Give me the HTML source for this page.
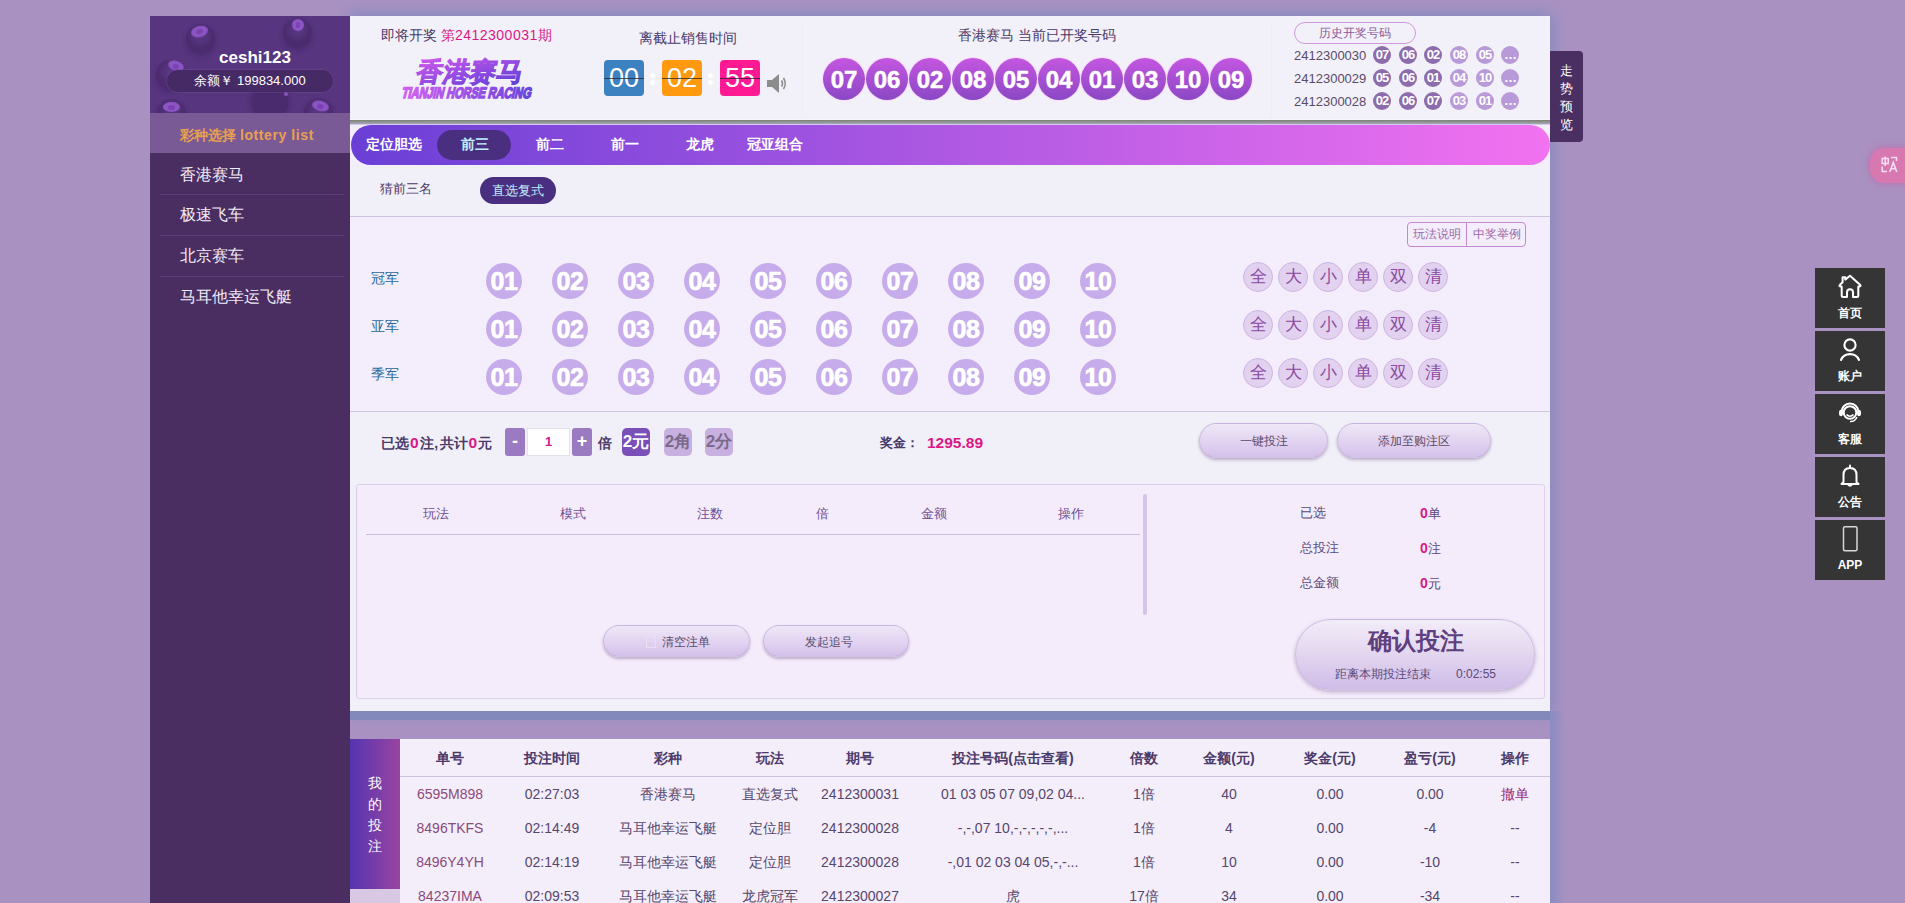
<!DOCTYPE html>
<html><head><meta charset="utf-8"><style>
*{margin:0;padding:0;box-sizing:border-box;}
html,body{width:1905px;height:903px;overflow:hidden;}
body{background:#a992c2;font-family:"Liberation Sans",sans-serif;position:relative;color:#4a3a6a;}
.a{position:absolute;}
.c{text-align:center;white-space:nowrap;}
#side{left:150px;top:16px;width:200px;height:887px;background:#4a2e62;z-index:5;}
#sidehead{left:0;top:0;width:200px;height:97px;background:#57357f;overflow:hidden;}
.bb{position:absolute;border-radius:50%;background:radial-gradient(circle at 50% 40%,#5a3a85 0%,#4c2c70 55%,#4a2a6c 75%,rgba(80,50,120,0) 100%);box-shadow:0 3px 5px rgba(50,25,80,.35);}
.bb i{position:absolute;border-radius:50%;background:#8c54c4;filter:blur(0.6px);}
.bb i:after{content:"";position:absolute;left:30%;top:25%;width:40%;height:50%;border-radius:50%;background:#7c42b2;}
#uname{left:5px;top:31px;width:200px;font-size:17px;font-weight:bold;color:#fff;line-height:22px;}
#bal{left:17px;top:54px;width:166px;height:22px;border-radius:11px;background:#452a66;box-shadow:0 0 0 1px rgba(110,70,150,.45);color:#fff;font-size:13px;line-height:22px;}
#lotbar{left:0;top:97px;width:200px;height:40px;background:#7a5a95;color:#e8a050;font-size:14px;font-weight:bold;line-height:44px;padding-left:30px;white-space:nowrap;}
.li{left:30px;width:170px;font-size:16px;color:#f2ecf8;line-height:20px;}
.sep{left:10px;width:184px;height:1px;background:#5c3f7a;}
#main{left:350px;top:16px;width:1200px;height:695px;background:#f3eefa;box-shadow:0 0 15px 2px #8088c0;}
#hdr{left:0;top:0;width:1200px;height:104px;background:#f2f0f8;}
.t13{font-size:14px;}
.pink{color:#da1888;}
.cd{width:40px;height:36px;border-radius:4px;color:#fff;font-size:27px;line-height:36px;text-align:center;overflow:hidden;}
.cd:after{content:"";position:absolute;left:0;top:18px;width:40px;height:1px;background:rgba(40,30,40,.75);}
.dot{width:5px;height:5px;border-radius:50%;background:#fff;}
.ball{width:42px;height:42px;border-radius:50%;background:linear-gradient(#c456e0,#8a48c4);color:#fff;font-weight:bold;font-size:24px;line-height:44px;-webkit-text-stroke:0.5px #fff;text-align:center;box-shadow:0 0 0 1px #f8d8ff;}
.hb{width:18px;height:18px;border-radius:50%;color:#fff;font-weight:bold;font-size:13px;line-height:18px;text-align:center;letter-spacing:-1px;}
.hb.d{background:#8c6cab;}
.hb.l{background:#b99ad8;}
.hnum{font-size:13px;color:#5a4a6a;}
.logo1{left:15px;top:0;font-size:28px;font-weight:900;transform:skewX(-12deg);-webkit-text-stroke:0.6px #9a50e0;line-height:32px;white-space:nowrap;background:linear-gradient(90deg,#c050e8,#6a40d8);-webkit-background-clip:text;color:transparent;}
.logo2{left:2px;top:34px;font-size:16px;font-weight:900;line-height:14px;white-space:nowrap;transform:skewX(-14deg) scaleX(0.68);transform-origin:0 0;letter-spacing:-0.3px;-webkit-text-stroke:0.8px #9050e0;background:linear-gradient(90deg,#d060f0,#6a40d8);-webkit-background-clip:text;color:transparent;}
#nav{left:1px;top:109px;width:1199px;height:40px;border-radius:20px;background:linear-gradient(90deg,#6a3fd6,#f272f0);}
.nt{top:0;height:40px;line-height:39px;color:#fff;font-size:14px;font-weight:bold;text-align:center;width:75px;}
.pill{background:#4a2f80;border-radius:15px;}
.lab{left:21px;font-size:14px;color:#2a6a9a;line-height:20px;}
.nb{width:36px;height:36px;border-radius:50%;background:#c6acea;color:#fff;font-weight:bold;font-size:25px;line-height:37px;-webkit-text-stroke:0.7px #fff;letter-spacing:-0.5px;text-align:center;}
.qb{width:30px;height:30px;border-radius:50%;background:#e2d2f0;border:1px solid #cdb6e2;color:#8a4aa0;font-size:17px;line-height:28px;text-align:center;}
.hl{left:0;width:1200px;height:1px;background:#cfc3dd;}
.btn{border-radius:18px;background:linear-gradient(#efe8f7,#d5c1eb);box-shadow:0 2px 3px rgba(90,60,120,.35);border:1px solid rgba(190,170,215,.6);color:#5a4a6a;font-size:12px;text-align:center;}
.sb{width:20px;height:28px;border-radius:3px;background:#9a7ac0;color:#fff;font-size:18px;line-height:26px;text-align:center;font-weight:bold;}
.mb{width:28px;height:28px;border-radius:5px;font-size:17px;line-height:28px;text-align:center;font-weight:bold;}
#bets{left:350px;top:739px;width:1200px;height:164px;background:#f4eefb;}
.th{font-size:14px;font-weight:bold;color:#4a3a6a;line-height:20px;}
.td{font-size:14px;color:#56466c;line-height:20px;}
.tb{left:1815px;width:70px;height:60px;background:#353535;color:#fff;}
.tb span{position:absolute;left:0;top:37px;width:70px;text-align:center;font-size:12px;font-weight:bold;line-height:16px;}
.tb svg{position:absolute;left:23px;top:6px;overflow:visible;}

</style></head><body>
<div id="side" class="a">
  <div id="sidehead" class="a">
    <div class="bb" style="left:36px;top:8px;width:29px;height:29px;"><i style="left:5px;top:2px;width:17px;height:11px;transform:rotate(-15deg);"></i></div>
    <div class="bb" style="left:133px;top:2px;width:29px;height:29px;"><i style="left:9px;top:1px;width:12px;height:12px;"></i></div>
    <div class="bb" style="left:6px;top:44px;width:29px;height:29px;"><i style="left:12px;top:1px;width:16px;height:10px;transform:rotate(20deg);"></i></div>
    <div class="bb" style="left:7px;top:83px;width:29px;height:29px;"><i style="left:6px;top:3px;width:17px;height:10px;"></i></div>
    <div class="bb" style="left:154px;top:82px;width:29px;height:29px;"><i style="left:8px;top:3px;width:17px;height:10px;transform:rotate(15deg);"></i></div>
    <div class="bb" style="left:102px;top:68px;width:36px;height:36px;background:#4a2b6e;box-shadow:0 0 4px 2px #4c2d70;"></div>
    <div class="a" style="left:134px;top:76px;width:4px;height:4px;border-radius:50%;background:#8a55c0;"></div>
    <div id="uname" class="a c">ceshi123</div>
    <div id="bal" class="a c">余额￥ 199834.000</div>
  </div>
  <div id="lotbar" class="a">彩种选择 <span style="letter-spacing:0.6px">lottery list</span></div>
  <div class="a li" style="top:149px;">香港赛马</div>
  <div class="a sep" style="top:178px;"></div>
  <div class="a li" style="top:189px;">极速飞车</div>
  <div class="a sep" style="top:219px;"></div>
  <div class="a li" style="top:230px;">北京赛车</div>
  <div class="a sep" style="top:260px;"></div>
  <div class="a li" style="top:271px;">马耳他幸运飞艇</div>
</div>
<div id="main" class="a">
<div id="hdr" class="a">
<div class="a t13" style="left:31px;top:10px;line-height:18px;white-space:nowrap;">即将开奖 <span class="pink">第<span style="letter-spacing:0.5px">2412300031</span>期</span></div>
<svg class="a" style="left:48px;top:37px;" width="160" height="50" viewBox="0 0 160 50">
<defs><linearGradient id="lg" x1="0" y1="0" x2="1" y2="1"><stop offset="0" stop-color="#d258ee"/><stop offset="1" stop-color="#5a3ed6"/></linearGradient>
<linearGradient id="lg2" x1="0" y1="0" x2="1" y2="0"><stop offset="0" stop-color="#d060f0"/><stop offset="1" stop-color="#6a44dc"/></linearGradient></defs>
<g transform="translate(17,28) skewX(-12)"><text x="0" y="0" font-size="26.5" font-weight="900" fill="url(#lg)" stroke="url(#lg)" stroke-width="0.9" style="font-family:'Liberation Sans',sans-serif">香港赛马</text></g>
<g transform="translate(3,44.5) skewX(-14) scale(0.685,0.95)"><text x="0" y="0" font-size="16" font-weight="bold" fill="url(#lg2)" stroke="url(#lg2)" stroke-width="1.6" letter-spacing="-0.1" style="font-family:'Liberation Sans',sans-serif">TIANJIN HORSE RACING</text></g>
</svg>
<div class="a t13 c" style="left:288px;top:13px;width:100px;line-height:18px;">离截止销售时间</div>
<div class="a cd" style="left:254px;top:44px;background:#3d82c0;">00</div>
<div class="a dot" style="left:300px;top:57px;"></div><div class="a dot" style="left:300px;top:64px;"></div>
<div class="a cd" style="left:312px;top:44px;background:#ff9910;">02</div>
<div class="a dot" style="left:358px;top:57px;"></div><div class="a dot" style="left:358px;top:64px;"></div>
<div class="a cd" style="left:370px;top:44px;background:#ff1a94;">55</div>
<svg class="a" style="left:416px;top:57px;" width="22" height="21" viewBox="0 0 22 21">
<path d="M1 7 H6 L13 1 V20 L6 14 H1 Z" fill="#8c8c8c"/>
<path d="M15.5 7.5 Q17.5 10.5 15.5 13.5" stroke="#8c8c8c" stroke-width="1.6" fill="none"/>
<path d="M17.5 5 Q21 10.5 17.5 16" stroke="#8c8c8c" stroke-width="1.6" fill="none"/>
</svg>
<div class="a" style="left:452px;top:6px;width:1px;height:94px;background:#eeecf4;"></div>
<div class="a t13" style="left:608px;top:10px;line-height:18px;white-space:nowrap;">香港赛马 当前已开奖号码</div>
<div class="a ball" style="left:473px;top:42px;">07</div>
<div class="a ball" style="left:516px;top:42px;">06</div>
<div class="a ball" style="left:559px;top:42px;">02</div>
<div class="a ball" style="left:602px;top:42px;">08</div>
<div class="a ball" style="left:645px;top:42px;">05</div>
<div class="a ball" style="left:688px;top:42px;">04</div>
<div class="a ball" style="left:731px;top:42px;">01</div>
<div class="a ball" style="left:774px;top:42px;">03</div>
<div class="a ball" style="left:817px;top:42px;">10</div>
<div class="a ball" style="left:860px;top:42px;">09</div>
<div class="a" style="left:921px;top:6px;width:1px;height:94px;background:#eeecf4;"></div>
<div class="a c" style="left:944px;top:6px;width:122px;height:22px;border:1px solid #cf98dc;border-radius:11px;font-size:12px;line-height:20px;color:#8a5a9a;">历史开奖号码</div>
<div class="a hnum" style="left:944px;top:31px;line-height:18px;">2412300030</div>
<div class="a hb d" style="left:1023px;top:30px;">07</div>
<div class="a hb d" style="left:1049px;top:30px;">06</div>
<div class="a hb d" style="left:1074px;top:30px;">02</div>
<div class="a hb l" style="left:1100px;top:30px;">08</div>
<div class="a hb l" style="left:1126px;top:30px;">05</div>
<div class="a hb l" style="left:1151px;top:30px;">…</div>
<div class="a hnum" style="left:944px;top:54px;line-height:18px;">2412300029</div>
<div class="a hb d" style="left:1023px;top:53px;">05</div>
<div class="a hb d" style="left:1049px;top:53px;">06</div>
<div class="a hb d" style="left:1074px;top:53px;">01</div>
<div class="a hb l" style="left:1100px;top:53px;">04</div>
<div class="a hb l" style="left:1126px;top:53px;">10</div>
<div class="a hb l" style="left:1151px;top:53px;">…</div>
<div class="a hnum" style="left:944px;top:77px;line-height:18px;">2412300028</div>
<div class="a hb d" style="left:1023px;top:76px;">02</div>
<div class="a hb d" style="left:1049px;top:76px;">06</div>
<div class="a hb d" style="left:1074px;top:76px;">07</div>
<div class="a hb l" style="left:1100px;top:76px;">03</div>
<div class="a hb l" style="left:1126px;top:76px;">01</div>
<div class="a hb l" style="left:1151px;top:76px;">…</div>
</div>
<div class="a" style="left:0;top:103px;width:1200px;height:1px;background:#f8f6fc;"></div>
<div class="a" style="left:0;top:104px;width:1200px;height:3.5px;background:linear-gradient(#7c8276,#a6a8b4);"></div>
<div class="a" style="left:0;top:107.5px;width:1200px;height:1.5px;background:#d6c8f4;"></div>
<div id="nav" class="a">
<div class="a nt" style="left:5px;">定位胆选</div>
<div class="a pill" style="left:86px;top:5px;width:74px;height:30px;"></div>
<div class="a nt" style="left:86px;color:#bff0ff;">前三</div>
<div class="a nt" style="left:161px;color:#fff;">前二</div>
<div class="a nt" style="left:236px;color:#fff;">前一</div>
<div class="a nt" style="left:311px;color:#fff;">龙虎</div>
<div class="a nt" style="left:386px;color:#fff;">冠亚组合</div>
</div>
<div class="a" style="left:0;top:149px;width:1200px;height:51px;background:#f1eff8;"></div>
<div class="a" style="left:0;top:201px;width:1200px;height:194px;background:#f4edfb;"></div>
<div class="a" style="left:0;top:396px;width:1200px;height:299px;background:#f1eff7;"></div>
<div class="a" style="left:30px;top:163px;font-size:13px;line-height:20px;color:#4a3a6a;">猜前三名</div>
<div class="a pill c" style="left:130px;top:161px;width:76px;height:27px;border-radius:14px;color:#c0f0ff;font-size:13px;line-height:27px;">直选复式</div>
<div class="a hl" style="top:200px;"></div>
<div class="a" style="left:1057px;top:206px;width:119px;height:25px;border:1px solid #c488d0;border-radius:4px;font-size:12px;color:#9a6aaa;line-height:23px;"><span class="a c" style="left:0;width:58px;">玩法说明</span><span class="a" style="left:58px;top:0;width:1px;height:23px;background:#c488d0;"></span><span class="a c" style="left:59px;width:59px;">中奖举例</span></div>
<div class="a lab" style="top:252px;">冠军</div>
<div class="a nb" style="left:136px;top:247px;">01</div>
<div class="a nb" style="left:202px;top:247px;">02</div>
<div class="a nb" style="left:268px;top:247px;">03</div>
<div class="a nb" style="left:334px;top:247px;">04</div>
<div class="a nb" style="left:400px;top:247px;">05</div>
<div class="a nb" style="left:466px;top:247px;">06</div>
<div class="a nb" style="left:532px;top:247px;">07</div>
<div class="a nb" style="left:598px;top:247px;">08</div>
<div class="a nb" style="left:664px;top:247px;">09</div>
<div class="a nb" style="left:730px;top:247px;">10</div>
<div class="a qb" style="left:893px;top:246px;">全</div>
<div class="a qb" style="left:928px;top:246px;">大</div>
<div class="a qb" style="left:963px;top:246px;">小</div>
<div class="a qb" style="left:998px;top:246px;">单</div>
<div class="a qb" style="left:1033px;top:246px;">双</div>
<div class="a qb" style="left:1068px;top:246px;">清</div>
<div class="a lab" style="top:300px;">亚军</div>
<div class="a nb" style="left:136px;top:295px;">01</div>
<div class="a nb" style="left:202px;top:295px;">02</div>
<div class="a nb" style="left:268px;top:295px;">03</div>
<div class="a nb" style="left:334px;top:295px;">04</div>
<div class="a nb" style="left:400px;top:295px;">05</div>
<div class="a nb" style="left:466px;top:295px;">06</div>
<div class="a nb" style="left:532px;top:295px;">07</div>
<div class="a nb" style="left:598px;top:295px;">08</div>
<div class="a nb" style="left:664px;top:295px;">09</div>
<div class="a nb" style="left:730px;top:295px;">10</div>
<div class="a qb" style="left:893px;top:294px;">全</div>
<div class="a qb" style="left:928px;top:294px;">大</div>
<div class="a qb" style="left:963px;top:294px;">小</div>
<div class="a qb" style="left:998px;top:294px;">单</div>
<div class="a qb" style="left:1033px;top:294px;">双</div>
<div class="a qb" style="left:1068px;top:294px;">清</div>
<div class="a lab" style="top:348px;">季军</div>
<div class="a nb" style="left:136px;top:343px;">01</div>
<div class="a nb" style="left:202px;top:343px;">02</div>
<div class="a nb" style="left:268px;top:343px;">03</div>
<div class="a nb" style="left:334px;top:343px;">04</div>
<div class="a nb" style="left:400px;top:343px;">05</div>
<div class="a nb" style="left:466px;top:343px;">06</div>
<div class="a nb" style="left:532px;top:343px;">07</div>
<div class="a nb" style="left:598px;top:343px;">08</div>
<div class="a nb" style="left:664px;top:343px;">09</div>
<div class="a nb" style="left:730px;top:343px;">10</div>
<div class="a qb" style="left:893px;top:342px;">全</div>
<div class="a qb" style="left:928px;top:342px;">大</div>
<div class="a qb" style="left:963px;top:342px;">小</div>
<div class="a qb" style="left:998px;top:342px;">单</div>
<div class="a qb" style="left:1033px;top:342px;">双</div>
<div class="a qb" style="left:1068px;top:342px;">清</div>
<div class="a hl" style="top:395px;"></div>
<div class="a" style="left:31px;top:417px;font-size:14px;font-weight:bold;line-height:20px;white-space:nowrap;">已选<span class="pink" style="font-size:15.5px;padding:0 1px">0</span>注<span style="padding:0 1.5px 0 0.5px">,</span>共计<span class="pink" style="font-size:15.5px;padding:0 1px">0</span>元</div>
<div class="a sb" style="left:155px;top:412px;">-</div>
<div class="a c" style="left:177px;top:412px;width:43px;height:28px;background:#fff;border:1px solid #e4e0ea;font-size:13px;line-height:26px;color:#da1888;font-weight:bold;">1</div>
<div class="a sb" style="left:222px;top:412px;">+</div>
<div class="a" style="left:248px;top:417px;font-size:14px;font-weight:bold;line-height:20px;">倍</div>
<div class="a mb" style="left:272px;top:412px;background:#7a50b8;color:#fff;">2元</div>
<div class="a mb" style="left:314px;top:412px;background:#c8b0e0;color:#7a6a8a;">2角</div>
<div class="a mb" style="left:355px;top:412px;background:#c8b0e0;color:#7a6a8a;">2分</div>
<div class="a" style="left:530px;top:417px;font-size:13px;font-weight:bold;line-height:20px;">奖金：</div>
<div class="a pink" style="left:577px;top:417px;font-size:15.5px;font-weight:bold;line-height:20px;">1295.89</div>
<div class="a btn" style="left:849px;top:407px;width:129px;height:35px;line-height:35px;">一键投注</div>
<div class="a btn" style="left:987px;top:407px;width:154px;height:35px;line-height:35px;">添加至购注区</div>
<div class="a" style="left:6px;top:468px;width:1189px;height:215px;border:1px solid #dcd0ea;border-radius:3px;background:#f4ecfb;">
<div class="a c" style="left:39px;top:19px;width:80px;font-size:13px;line-height:20px;color:#6e4e94;">玩法</div>
<div class="a c" style="left:176px;top:19px;width:80px;font-size:13px;line-height:20px;color:#6e4e94;">模式</div>
<div class="a c" style="left:313px;top:19px;width:80px;font-size:13px;line-height:20px;color:#6e4e94;">注数</div>
<div class="a c" style="left:425px;top:19px;width:80px;font-size:13px;line-height:20px;color:#6e4e94;">倍</div>
<div class="a c" style="left:537px;top:19px;width:80px;font-size:13px;line-height:20px;color:#6e4e94;">金额</div>
<div class="a c" style="left:674px;top:19px;width:80px;font-size:13px;line-height:20px;color:#6e4e94;">操作</div>
<div class="a" style="left:9px;top:49px;width:774px;height:1px;background:#cbbfdc;"></div>
<div class="a" style="left:786px;top:9px;width:4px;height:121px;background:#d4c4ea;border-radius:2px;"></div>
<div class="a btn" style="left:246px;top:140px;width:147px;height:32px;line-height:32px;"><span style="display:inline-block;width:10px;height:12px;border:1px solid #e8e0f0;margin-right:3px;vertical-align:-2px;"></span><span style="position:relative;left:3px">清空注单</span></div>
<div class="a btn" style="left:406px;top:140px;width:146px;height:32px;line-height:32px;"><span style="position:relative;left:-7px">发起追号</span></div>
<div class="a" style="left:943px;top:18px;font-size:13px;line-height:20px;color:#5a4a7a;">已选</div>
<div class="a" style="left:1063px;top:18px;font-size:13px;line-height:20px;color:#5a4a7a;"><b class="pink" style="font-size:14px;">0</b>单</div>
<div class="a" style="left:943px;top:53px;font-size:13px;line-height:20px;color:#5a4a7a;">总投注</div>
<div class="a" style="left:1063px;top:53px;font-size:13px;line-height:20px;color:#5a4a7a;"><b class="pink" style="font-size:14px;">0</b>注</div>
<div class="a" style="left:943px;top:88px;font-size:13px;line-height:20px;color:#5a4a7a;">总金额</div>
<div class="a" style="left:1063px;top:88px;font-size:13px;line-height:20px;color:#5a4a7a;"><b class="pink" style="font-size:14px;">0</b>元</div>
<div class="a" style="left:938px;top:134px;width:240px;height:71px;border-radius:36px;background:linear-gradient(#f2ecf8 0%,#e4d8f0 45%,#d0bce8 100%);box-shadow:0 2px 4px rgba(90,60,120,.35);border:1px solid rgba(200,180,220,.7);"><div class="a c" style="left:0;top:6px;width:240px;font-size:24px;font-weight:bold;color:#5e3f80;line-height:30px;">确认投注</div><div class="a" style="left:39px;top:45px;font-size:12px;line-height:18px;color:#5a4a7a;">距离本期投注结束</div><div class="a" style="left:160px;top:45px;font-size:12px;line-height:18px;color:#5a4a7a;">0:02:55</div></div>
</div>
</div>
<div class="a" style="left:350px;top:711px;width:1200px;height:9px;background:#8489bc;"></div>
<div class="a" style="left:1550px;top:711px;width:16px;height:192px;background:linear-gradient(90deg,#8a8cc0,rgba(169,146,194,0));"></div>
<div id="bets" class="a">
<div class="a" style="left:0;top:0;width:50px;height:150px;background:linear-gradient(90deg,#5434b0,#9a45a0);"></div>
<div class="a" style="left:0;top:150px;width:50px;height:14px;background:#d8c8e4;"></div>
<div class="a c" style="left:0;top:34px;width:50px;font-size:14px;color:#fff;line-height:20px;">我</div>
<div class="a c" style="left:0;top:55px;width:50px;font-size:14px;color:#fff;line-height:20px;">的</div>
<div class="a c" style="left:0;top:76px;width:50px;font-size:14px;color:#fff;line-height:20px;">投</div>
<div class="a c" style="left:0;top:97px;width:50px;font-size:14px;color:#fff;line-height:20px;">注</div>
<div class="a c th" style="left:20px;top:9px;width:160px;">单号</div>
<div class="a c th" style="left:122px;top:9px;width:160px;">投注时间</div>
<div class="a c th" style="left:238px;top:9px;width:160px;">彩种</div>
<div class="a c th" style="left:340px;top:9px;width:160px;">玩法</div>
<div class="a c th" style="left:430px;top:9px;width:160px;">期号</div>
<div class="a c th" style="left:583px;top:9px;width:160px;">投注号码(点击查看)</div>
<div class="a c th" style="left:714px;top:9px;width:160px;">倍数</div>
<div class="a c th" style="left:799px;top:9px;width:160px;">金额(元)</div>
<div class="a c th" style="left:900px;top:9px;width:160px;">奖金(元)</div>
<div class="a c th" style="left:1000px;top:9px;width:160px;">盈亏(元)</div>
<div class="a c th" style="left:1085px;top:9px;width:160px;">操作</div>
<div class="a" style="left:50px;top:37px;width:1150px;height:1px;background:#cdc2da;"></div>
<div class="a c td" style="left:20px;top:45px;width:160px;color:#8a4a7a;">6595M898</div>
<div class="a c td" style="left:122px;top:45px;width:160px;">02:27:03</div>
<div class="a c td" style="left:238px;top:45px;width:160px;">香港赛马</div>
<div class="a c td" style="left:340px;top:45px;width:160px;">直选复式</div>
<div class="a c td" style="left:430px;top:45px;width:160px;">2412300031</div>
<div class="a c td" style="left:583px;top:45px;width:160px;">01 03 05 07 09,02 04...</div>
<div class="a c td" style="left:714px;top:45px;width:160px;">1倍</div>
<div class="a c td" style="left:799px;top:45px;width:160px;">40</div>
<div class="a c td" style="left:900px;top:45px;width:160px;">0.00</div>
<div class="a c td" style="left:1000px;top:45px;width:160px;">0.00</div>
<div class="a c td" style="left:1085px;top:45px;width:160px;color:#9a2a7a;">撤单</div>
<div class="a c td" style="left:20px;top:79px;width:160px;color:#8a4a7a;">8496TKFS</div>
<div class="a c td" style="left:122px;top:79px;width:160px;">02:14:49</div>
<div class="a c td" style="left:238px;top:79px;width:160px;">马耳他幸运飞艇</div>
<div class="a c td" style="left:340px;top:79px;width:160px;">定位胆</div>
<div class="a c td" style="left:430px;top:79px;width:160px;">2412300028</div>
<div class="a c td" style="left:583px;top:79px;width:160px;">-,-,07 10,-,-,-,-,-,...</div>
<div class="a c td" style="left:714px;top:79px;width:160px;">1倍</div>
<div class="a c td" style="left:799px;top:79px;width:160px;">4</div>
<div class="a c td" style="left:900px;top:79px;width:160px;">0.00</div>
<div class="a c td" style="left:1000px;top:79px;width:160px;">-4</div>
<div class="a c td" style="left:1085px;top:79px;width:160px;">--</div>
<div class="a c td" style="left:20px;top:113px;width:160px;color:#8a4a7a;">8496Y4YH</div>
<div class="a c td" style="left:122px;top:113px;width:160px;">02:14:19</div>
<div class="a c td" style="left:238px;top:113px;width:160px;">马耳他幸运飞艇</div>
<div class="a c td" style="left:340px;top:113px;width:160px;">定位胆</div>
<div class="a c td" style="left:430px;top:113px;width:160px;">2412300028</div>
<div class="a c td" style="left:583px;top:113px;width:160px;">-,01 02 03 04 05,-,-...</div>
<div class="a c td" style="left:714px;top:113px;width:160px;">1倍</div>
<div class="a c td" style="left:799px;top:113px;width:160px;">10</div>
<div class="a c td" style="left:900px;top:113px;width:160px;">0.00</div>
<div class="a c td" style="left:1000px;top:113px;width:160px;">-10</div>
<div class="a c td" style="left:1085px;top:113px;width:160px;">--</div>
<div class="a c td" style="left:20px;top:147px;width:160px;color:#8a4a7a;">84237IMA</div>
<div class="a c td" style="left:122px;top:147px;width:160px;">02:09:53</div>
<div class="a c td" style="left:238px;top:147px;width:160px;">马耳他幸运飞艇</div>
<div class="a c td" style="left:340px;top:147px;width:160px;">龙虎冠军</div>
<div class="a c td" style="left:430px;top:147px;width:160px;">2412300027</div>
<div class="a c td" style="left:583px;top:147px;width:160px;">虎</div>
<div class="a c td" style="left:714px;top:147px;width:160px;">17倍</div>
<div class="a c td" style="left:799px;top:147px;width:160px;">34</div>
<div class="a c td" style="left:900px;top:147px;width:160px;">0.00</div>
<div class="a c td" style="left:1000px;top:147px;width:160px;">-34</div>
<div class="a c td" style="left:1085px;top:147px;width:160px;">--</div>
</div>
<div class="a" style="left:1550px;top:51px;width:33px;height:91px;background:#4a2f63;border-radius:0 4px 4px 0;">
<div class="a c" style="left:0;top:11px;width:33px;font-size:13px;color:#fff;line-height:18px;">走</div>
<div class="a c" style="left:0;top:29px;width:33px;font-size:13px;color:#fff;line-height:18px;">势</div>
<div class="a c" style="left:0;top:47px;width:33px;font-size:13px;color:#fff;line-height:18px;">预</div>
<div class="a c" style="left:0;top:65px;width:33px;font-size:13px;color:#fff;line-height:18px;">览</div>
</div>
<div class="a" style="left:1870px;top:148px;width:50px;height:35px;border-radius:14px;background:#d878b0;box-shadow:0 0 8px rgba(200,80,160,.6);"></div>
<svg class="a" style="left:1881px;top:156px;" width="17" height="17" viewBox="0 0 17 17">
<path d="M1.2 2.5 H7.2 V7.5 H1.2 Z M4.2 0.5 V10" stroke="#f6e0f6" stroke-width="1.5" fill="none"/>
<path d="M1.2 10.5 V15.5 H6" stroke="#f6e0f6" stroke-width="1.5" fill="none"/>
<path d="M10 1.5 H15.5 V5" stroke="#f6e0f6" stroke-width="1.5" fill="none"/>
<path d="M8.8 16 L12.3 6.5 L15.8 16 M10 12.8 H14.6" stroke="#f6e0f6" stroke-width="1.6" fill="none"/>
</svg>
<div class="a tb" style="top:268px;"><svg width="24" height="26" viewBox="0 0 24 26"><path d="M12 1.8 L22.3 11 Q23 12 21.8 12.4 L20.3 12.4 L20.3 21.5 Q20.3 23 18.8 23 L15 23 L15 18.5 Q15 15.3 12 15.3 Q9 15.3 9 18.5 L9 23 L5.2 23 Q3.7 23 3.7 21.5 L3.7 12.4 L2.2 12.4 Q1 12 1.7 11 L4.6 8.2 L4.6 3.2 L7.2 3.2 L7.2 5.6 Z" stroke="#fff" stroke-width="2" fill="none" stroke-linejoin="round"/></svg><span>首页</span></div>
<div class="a tb" style="top:331px;"><svg width="24" height="26" viewBox="0 0 24 26"><circle cx="12" cy="8" r="5.6" stroke="#fff" stroke-width="2.1" fill="none"/><path d="M3 23 A9.6 9 0 0 1 21 23" stroke="#fff" stroke-width="2.1" fill="none" stroke-linecap="round"/></svg><span>账户</span></div>
<div class="a tb" style="top:394px;"><svg width="24" height="26" viewBox="0 0 24 26"><path d="M3.5 12 A8.5 8.5 0 0 1 20.5 12" stroke="#fff" stroke-width="2" fill="none"/><circle cx="12" cy="12.5" r="6.3" stroke="#fff" stroke-width="2" fill="none"/><path d="M8.5 14.5 Q12 18 15.5 14.5" stroke="#fff" stroke-width="1.6" fill="none"/><ellipse cx="3" cy="13" rx="2" ry="3.2" fill="#fff"/><ellipse cx="21" cy="13" rx="2" ry="3.2" fill="#fff"/><path d="M19 17 Q17 22 12 21.5" stroke="#fff" stroke-width="1.4" fill="none"/></svg><span>客服</span></div>
<div class="a tb" style="top:457px;"><svg width="24" height="26" viewBox="0 0 24 26"><path d="M12 2.5 V4.5 M5.5 19 V12 Q5.5 5 12 5 Q18.5 5 18.5 12 V19 L20.5 21 H3.5 Z M10 21.5 Q12 24 14 21.5" stroke="#fff" stroke-width="2" fill="none" stroke-linejoin="round" stroke-linecap="round"/></svg><span>公告</span></div>
<div class="a tb" style="top:520px;"><svg width="24" height="26" viewBox="0 0 24 26"><rect x="5.5" y="0.8" width="13.5" height="24" rx="1.5" stroke="#d8d8d8" stroke-width="1.5" fill="none"/></svg><span>APP</span></div>
</body></html>
